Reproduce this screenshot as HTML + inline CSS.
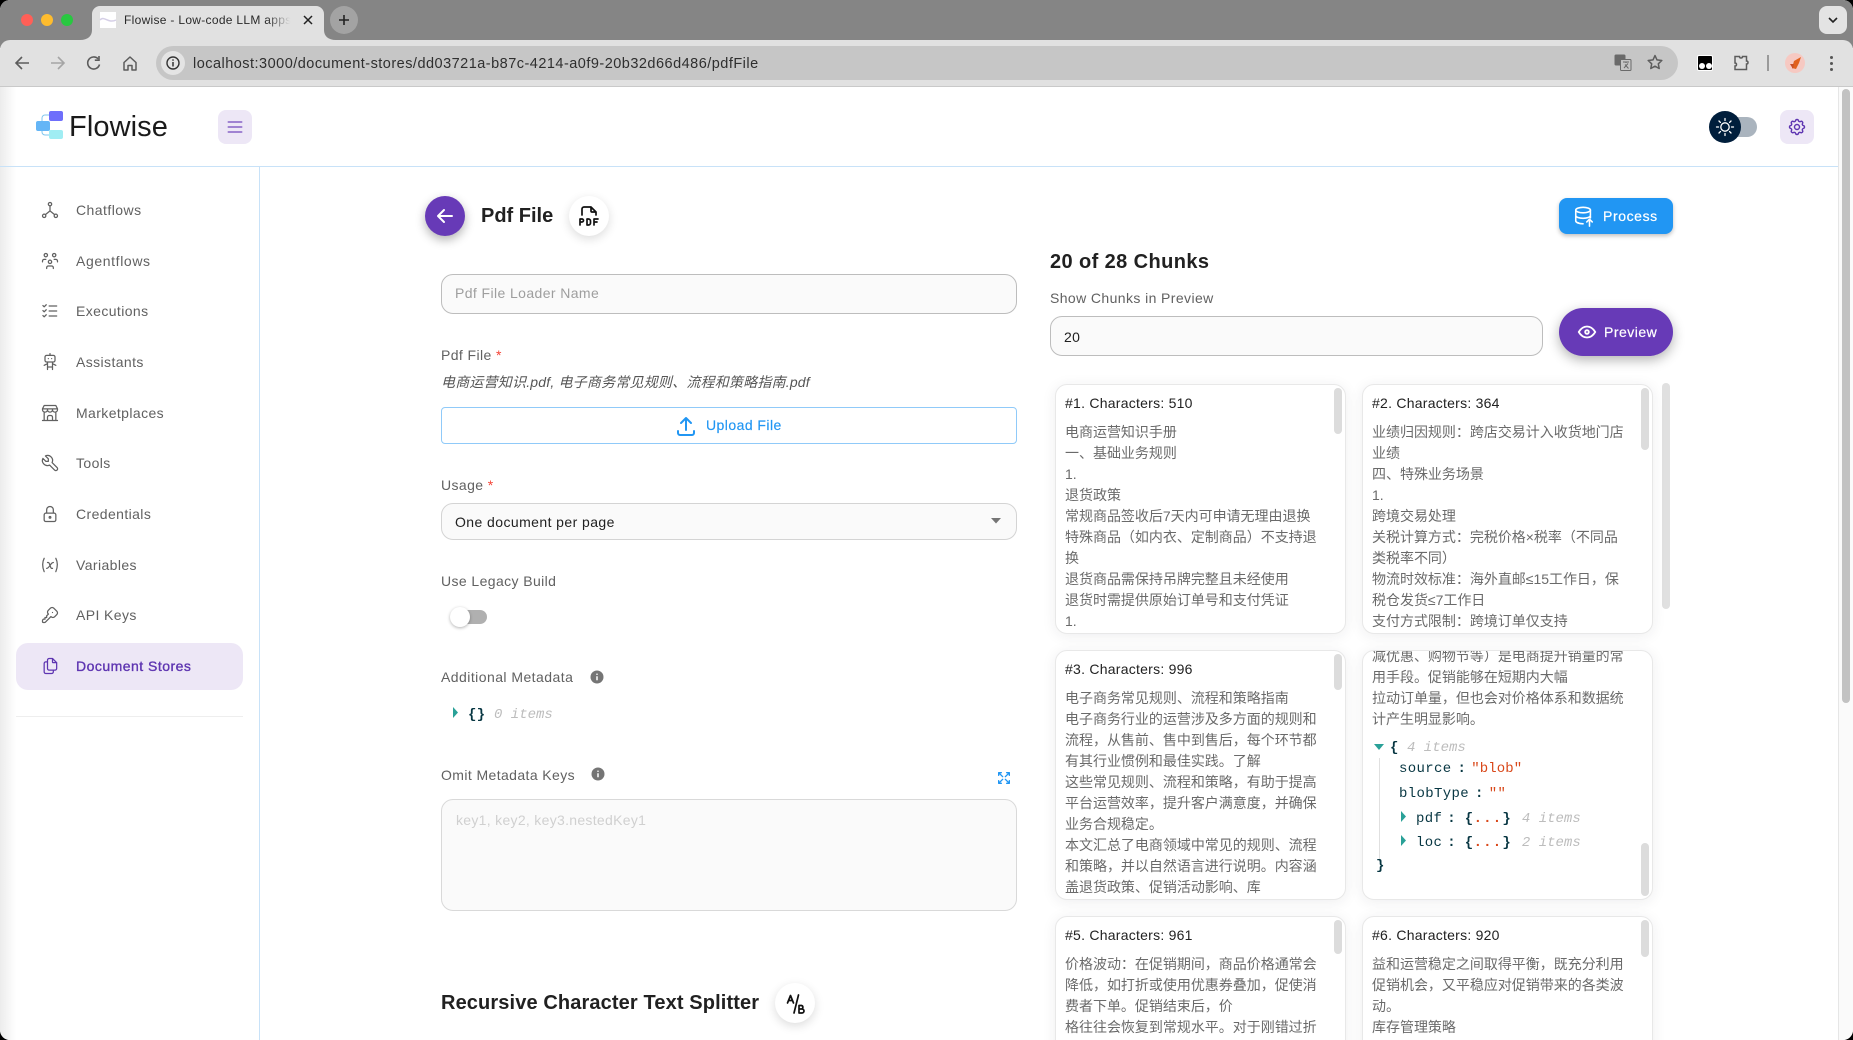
<!DOCTYPE html>
<html lang="zh-CN"><head><meta charset="utf-8"><title>Flowise - Low-code LLM apps</title>
<style>
*{box-sizing:border-box;margin:0;padding:0}
html,body{width:1853px;height:1040px;overflow:hidden;background:#000}
body{font-family:"Liberation Sans","Noto Sans CJK SC",sans-serif;font-size:14px;color:#616161}
#w{position:relative;width:1853px;height:1040px;overflow:hidden;background:#fff;border-radius:10px}
.a{position:absolute}
.t{position:absolute;white-space:nowrap;line-height:20px;height:20px;letter-spacing:.4px}
svg{position:absolute;overflow:visible}
.ic{fill:none;stroke:#616161;stroke-width:1.5;stroke-linecap:round;stroke-linejoin:round}
.card{position:absolute;width:291px;height:250px;background:#fff;border:1px solid #e8e8e8;border-radius:12px;box-shadow:0 2px 14px rgba(32,40,45,.08);overflow:hidden}
.card .ttl{position:absolute;left:9px;top:8px;line-height:20px;color:#212121;letter-spacing:.25px;white-space:nowrap}
.card .b{position:absolute;left:9px;top:37px;line-height:21px;color:#6a6a6a;white-space:nowrap;letter-spacing:-.02px}
.card .th{position:absolute;width:8px;background:#dcdcdc;border-radius:4px}
.field{position:absolute;background:#fafafa;border:1px solid #bdbdbd;border-radius:12px}
.circ{position:absolute;width:40px;height:40px;border-radius:50%;background:#fff;box-shadow:0 3px 10px rgba(0,0,0,.14)}
.m{font-family:"Liberation Mono",monospace;position:absolute;white-space:nowrap;line-height:20px;height:20px;font-size:14px;letter-spacing:.35px}
.it{font-style:italic;color:#bdbdbd;letter-spacing:0}
.r{color:#d9481a}
.k{color:#073642}
.bk{color:#073642;font-weight:bold}
.req{color:#f44336}
</style></head><body><div id="w">

<!-- browser chrome -->
<div class="a" style="left:0;top:0;width:1853px;height:48px;background:#858585"></div>
<div class="a" style="left:0;top:40px;width:1853px;height:47px;background:#e1e1e1;border-radius:10px 10px 0 0;border-bottom:1px solid #c9c9c9"></div>
<svg style="left:0;top:0" width="400" height="48"><path d="M80 40C88 40 92 36 92 30V14a8 8 0 0 1 8-8H316a8 8 0 0 1 8 8V30C324 36 328 40 336 40Z" fill="#e1e1e1"/></svg>
<div class="a" style="left:21px;top:14px;width:12px;height:12px;border-radius:50%;background:#ff5f57"></div>
<div class="a" style="left:41px;top:14px;width:12px;height:12px;border-radius:50%;background:#febc2e"></div>
<div class="a" style="left:61px;top:14px;width:12px;height:12px;border-radius:50%;background:#28c840"></div>
<div class="a" style="left:100px;top:12px;width:16px;height:16px;background:#fff"></div>
<svg style="left:100px;top:12px" width="16" height="16"><path d="M0 8C4 3 8 12 16 8" fill="none" stroke="#d5cfe6" stroke-width="1.5"/></svg>
<div class="t" style="left:124px;top:10px;width:168px;overflow:hidden;font-size:12px;color:#2a2a2a;letter-spacing:.3px;-webkit-mask-image:linear-gradient(90deg,#000 85%,transparent 99%)">Flowise - Low-code LLM apps</div>
<svg style="left:302px;top:14px" width="12" height="12"><path d="M2 2l8 8M10 2l-8 8" stroke="#222" stroke-width="1.5"/></svg>
<div class="a" style="left:330px;top:6px;width:28px;height:28px;border-radius:50%;background:#a3a3a3"></div>
<svg style="left:338px;top:14px" width="12" height="12"><path d="M6 1v10M1 6h10" stroke="#222" stroke-width="1.6"/></svg>
<div class="a" style="left:1819px;top:6px;width:28px;height:28px;border-radius:8px;background:#e3e3e3"></div>
<svg style="left:1827px;top:15px" width="12" height="10"><path d="M2 3l4 4 4-4" fill="none" stroke="#222" stroke-width="1.6"/></svg>

<svg style="left:14px;top:55px" width="16" height="16"><path d="M15 8H2M8 2L2 8l6 6" fill="none" stroke="#5c5c5c" stroke-width="1.6"/></svg>
<svg style="left:50px;top:55px" width="16" height="16"><path d="M1 8h13M8 2l6 6-6 6" fill="none" stroke="#a5a5a5" stroke-width="1.6"/></svg>
<svg style="left:86px;top:55px" width="16" height="16"><path d="M13.5 9.5A6 6 0 1 1 12 3.8M13 1v4.2H8.8" fill="none" stroke="#5c5c5c" stroke-width="1.6"/></svg>
<svg style="left:122px;top:55px" width="16" height="16"><path d="M2 7.5L8 2l6 5.5V15h-4v-4.5H6V15H2Z" fill="none" stroke="#5c5c5c" stroke-width="1.5" stroke-linejoin="round"/></svg>
<div class="a" style="left:156px;top:46px;width:1522px;height:34px;border-radius:17px;background:#c6c6c6"></div>
<div class="a" style="left:161px;top:51px;width:24px;height:24px;border-radius:50%;background:#e4e4e4"></div>
<svg style="left:166px;top:56px" width="14" height="14"><circle cx="7" cy="7" r="6" fill="none" stroke="#333" stroke-width="1.4"/><path d="M7 6v4.5M7 3.4v1.4" stroke="#333" stroke-width="1.5"/></svg>
<div class="t" style="left:193px;top:54px;font-size:14.5px;letter-spacing:.48px;color:#2f2f2f">localhost:3000/document-stores/dd03721a-b87c-4214-a0f9-20b32d66d486/pdfFile</div>
<svg style="left:1614px;top:54px" width="18" height="18"><rect x="0.5" y="0.5" width="11" height="11" rx="1.5" fill="#6a6a6a"/><rect x="6.5" y="5.5" width="10.5" height="11" rx="1" fill="#c6c6c6" stroke="#6a6a6a"/><path d="M9 8h6M12 8v1M10 14l4-4.5M11 10.5l3.5 4" stroke="#6a6a6a" fill="none"/></svg>
<svg style="left:1647px;top:54px" width="16" height="16"><path d="M8 1.5l2 4.4 4.8.6-3.5 3.3.9 4.7L8 12.2l-4.2 2.3.9-4.7L1.2 6.5 6 5.9Z" fill="none" stroke="#5c5c5c" stroke-width="1.5" stroke-linejoin="round"/></svg>
<div class="a" style="left:1697px;top:55px;width:16px;height:16px;border-radius:2px;background:#000;border:1px solid #fff"></div>
<div class="a" style="left:1699px;top:63px;width:6px;height:6px;border-radius:50%;background:#fff"></div>
<div class="a" style="left:1706px;top:63px;width:6px;height:6px;border-radius:50%;background:#fff"></div>
<svg style="left:1733px;top:55px" width="16" height="16"><path d="M2 1.5h4.5c0 2 3 2 3 0H13.5v4.500c2 0 2 3 0 3V14.500H2V11c2 0 2-3 0-3Z" fill="none" stroke="#5c5c5c" stroke-width="1.5"/></svg>
<div class="a" style="left:1767px;top:55px;width:1.5px;height:16px;background:#9a9a9a"></div>
<div class="a" style="left:1785px;top:53px;width:20px;height:20px;border-radius:50%;background:#f6c9c2"></div>
<svg style="left:1787px;top:55px" width="16" height="16"><path d="M5 13L7 6l7-4-2 6-3 6Z" fill="#e0601c"/><path d="M3 9l4 0-1 5Z" fill="#c94f27"/></svg>
<div class="a" style="left:1830px;top:56px;width:3px;height:3px;border-radius:50%;background:#555;box-shadow:0 6px 0 #555,0 12px 0 #555"></div>

<!-- window left shading -->
<div class="a" style="left:0;top:87px;width:16px;height:953px;background:linear-gradient(90deg,#ececec,#fff)"></div>

<!-- header -->
<svg style="left:36px;top:111px" width="28" height="28">
<path d="M14 4H9a3 3 0 0 0-3 3v5M6 19v2a3 3 0 0 0 3 3h4" fill="none" stroke="#7fc6ee" stroke-width="1"/>
<rect x="13" y="0" width="14" height="10" rx="2" fill="#6e6efb"/><rect x="0" y="10" width="14" height="10" rx="2" fill="#64b5f6"/><rect x="13" y="19" width="14" height="9" rx="2" fill="#a0edf3"/></svg>
<div class="t" style="left:69px;top:110px;height:34px;line-height:34px;font-size:29px;color:#1a1a1a;letter-spacing:.1px">Flowise</div>
<div class="a" style="left:218px;top:110px;width:34px;height:34px;border-radius:8px;background:#ede7f6"></div>
<svg style="left:225px;top:117px" width="20" height="20" viewBox="0 0 24 24"><path d="M4 6h16M4 12h16M4 18h16" fill="none" stroke="#9575cd" stroke-width="2" stroke-linecap="round"/></svg>
<div class="a" style="left:1713px;top:117px;width:44px;height:20px;border-radius:10px;background:#aab4be"></div>
<div class="a" style="left:1709px;top:111px;width:32px;height:32px;border-radius:50%;background:#001e3c"></div>
<svg style="left:1715px;top:117px" width="20" height="20" viewBox="0 0 20 20"><circle cx="10" cy="10" r="4.2" fill="none" stroke="#fff" stroke-width="1.3"/><path d="M10 1.5v2M10 16.5v2M1.5 10h2M16.5 10h2M4 4l1.4 1.4M14.6 14.6L16 16M4 16l1.4-1.4M14.6 5.4L16 4" stroke="#fff" stroke-width="1.3" stroke-linecap="round"/></svg>
<div class="a" style="left:1780px;top:110px;width:34px;height:34px;border-radius:8px;background:#ede7f6"></div>
<svg style="left:1787px;top:117px" width="20" height="20" viewBox="0 0 24 24"><g fill="none" stroke="#5e35b1" stroke-width="1.7" stroke-linecap="round" stroke-linejoin="round"><path d="M10.325 4.317c.426 -1.756 2.924 -1.756 3.35 0a1.724 1.724 0 0 0 2.573 1.066c1.543 -.94 3.31 .826 2.37 2.37a1.724 1.724 0 0 0 1.065 2.572c1.756 .426 1.756 2.924 0 3.35a1.724 1.724 0 0 0 -1.066 2.573c.94 1.543 -.826 3.31 -2.37 2.37a1.724 1.724 0 0 0 -2.572 1.065c-.426 1.756 -2.924 1.756 -3.35 0a1.724 1.724 0 0 0 -2.573 -1.066c-1.543 .94 -3.31 -.826 -2.37 -2.37a1.724 1.724 0 0 0 -1.065 -2.572c-1.756 -.426 -1.756 -2.924 0 -3.35a1.724 1.724 0 0 0 1.066 -2.573c-.94 -1.543 .826 -3.31 2.37 -2.37c1 .608 2.296 .07 2.572 -1.065z"/><circle cx="12" cy="12" r="3"/></g></svg>
<div class="a" style="left:0;top:166px;width:1838px;height:1px;background:#c8e2f8"></div>
<div class="a" style="left:259px;top:166px;width:1px;height:874px;background:#c8e2f8"></div>

<!-- page scrollbar -->
<div class="a" style="left:1838px;top:87px;width:15px;height:953px;background:#fafafa;border-left:1px solid #e6e6e6"></div>
<div class="a" style="left:1842px;top:89px;width:8px;height:614px;border-radius:4px;background:#c2c2c2"></div>

<!-- sidebar -->
<div class="a" style="left:16px;top:643px;width:227px;height:47px;border-radius:12px;background:#ede7f6"></div>
<div class="a" style="left:16px;top:716px;width:227px;height:1px;background:#eeeeee"></div>

<svg class="ic" style="left:40px;top:200px" width="20" height="20" viewBox="0 0 24 24"><circle cx="12" cy="5" r="2"/><circle cx="5" cy="19" r="2"/><circle cx="19" cy="19" r="2"/><path d="M6.5 17.5l5.5 -4.5l5.5 4.5M12 7v6"/></svg>
<div class="t" style="left:76px;top:200px;letter-spacing:.45px">Chatflows</div>
<svg class="ic" style="left:40px;top:251px" width="20" height="20" viewBox="0 0 24 24"><path d="M10 13a2 2 0 1 0 4 0a2 2 0 0 0 -4 0M8 21v-1a2 2 0 0 1 2 -2h4a2 2 0 0 1 2 2v1M15 5a2 2 0 1 0 4 0a2 2 0 0 0 -4 0M17 10h2a2 2 0 0 1 2 2v1M5 5a2 2 0 1 0 4 0a2 2 0 0 0 -4 0M3 13v-1a2 2 0 0 1 2 -2h2"/></svg>
<div class="t" style="left:76px;top:251px;letter-spacing:.62px">Agentflows</div>
<svg class="ic" style="left:40px;top:301px" width="20" height="20" viewBox="0 0 24 24"><path d="M3.5 5.5l1.5 1.5l2.5 -2.5M3.5 11.5l1.5 1.5l2.5 -2.5M3.5 17.5l1.5 1.5l2.5 -2.5M11 6h9M11 12h9M11 18h9"/></svg>
<div class="t" style="left:76px;top:301px">Executions</div>
<svg class="ic" style="left:40px;top:352px" width="20" height="20" viewBox="0 0 24 24"><path d="M6 6a2 2 0 0 1 2 -2h8a2 2 0 0 1 2 2v4a2 2 0 0 1 -2 2h-8a2 2 0 0 1 -2 -2zM12 2v2M9 12v9M15 12v9M5 16l4 -2M15 14l4 2M9 18h6M10 8v.01M14 8v.01"/></svg>
<div class="t" style="left:76px;top:352px">Assistants</div>
<svg class="ic" style="left:40px;top:403px" width="20" height="20" viewBox="0 0 24 24"><path d="M3 21h18M3 7v1a3 3 0 0 0 6 0v-1m0 1a3 3 0 0 0 6 0v-1m0 1a3 3 0 0 0 6 0v-1h-18l2 -4h14l2 4M5 21v-10.15M19 21v-10.15M9 21v-4a2 2 0 0 1 2 -2h2a2 2 0 0 1 2 2v4"/></svg>
<div class="t" style="left:76px;top:403px">Marketplaces</div>
<svg class="ic" style="left:40px;top:453px" width="20" height="20" viewBox="0 0 24 24"><path d="M7 10h3v-3l-3.5 -3.5a6 6 0 0 1 8 8l6 6a2 2 0 0 1 -3 3l-6 -6a6 6 0 0 1 -8 -8l3.5 3.5"/></svg>
<div class="t" style="left:76px;top:453px">Tools</div>
<svg class="ic" style="left:40px;top:504px" width="20" height="20" viewBox="0 0 24 24"><path d="M5 13a2 2 0 0 1 2 -2h10a2 2 0 0 1 2 2v6a2 2 0 0 1 -2 2h-10a2 2 0 0 1 -2 -2v-6zM11 16a1 1 0 1 0 2 0a1 1 0 0 0 -2 0M8 11v-4a4 4 0 1 1 8 0v4"/></svg>
<div class="t" style="left:76px;top:504px">Credentials</div>
<svg class="ic" style="left:40px;top:555px" width="20" height="20" viewBox="0 0 24 24"><path d="M5 4c-2.5 5 -2.5 10 0 16m14 -16c2.5 5 2.5 10 0 16m-10 -11h1c1 0 1 1 2.016 3.527c.984 2.473 .984 3.473 1.984 3.473h1M8 16c1.5 0 3 -2 4 -3.5s2.5 -3.5 4 -3.5"/></svg>
<div class="t" style="left:76px;top:555px">Variables</div>
<svg class="ic" style="left:40px;top:605px" width="20" height="20" viewBox="0 0 24 24"><path d="M16.555 3.843l3.602 3.602a2.877 2.877 0 0 1 0 4.069l-2.643 2.643a2.877 2.877 0 0 1 -4.069 0l-.301 -.301l-6.558 6.558a2 2 0 0 1 -1.239 .578l-.175 .008h-1.172a1 1 0 0 1 -.993 -.883l-.007 -.117v-1.172a2 2 0 0 1 .467 -1.284l.119 -.13l.414 -.414h2v-2h2v-2l2.144 -2.144l-.301 -.301a2.877 2.877 0 0 1 0 -4.069l2.643 -2.643a2.877 2.877 0 0 1 4.069 0zM15 9h.01"/></svg>
<div class="t" style="left:76px;top:605px">API Keys</div>
<svg class="ic" style="left:40px;top:656px;stroke:#5e35b1" width="20" height="20" viewBox="0 0 24 24"><path d="M15 3v4a1 1 0 0 0 1 1h4M18 17h-7a2 2 0 0 1 -2 -2v-10a2 2 0 0 1 2 -2h4l5 5v7a2 2 0 0 1 -2 2zM16 17v2a2 2 0 0 1 -2 2h-7a2 2 0 0 1 -2 -2v-10a2 2 0 0 1 2 -2h2"/></svg>
<div class="t" style="left:76px;top:656px;color:#5e35b1;letter-spacing:.48px;-webkit-text-stroke:.35px #5e35b1">Document Stores</div>

<!-- title row -->
<div class="a" style="left:425px;top:196px;width:40px;height:40px;border-radius:50%;background:#673ab7;box-shadow:0 4px 10px rgba(0,0,0,.3)"></div>
<svg style="left:433px;top:204px" width="24" height="24" viewBox="0 0 24 24"><path d="M5 12h14M5 12l6 6M5 12l6 -6" fill="none" stroke="#fff" stroke-width="2" stroke-linecap="round" stroke-linejoin="round"/></svg>
<div class="t" style="left:481px;top:206px;font-size:20px;font-weight:bold;color:#212121;letter-spacing:0">Pdf File</div>
<div class="circ" style="left:569px;top:196px"></div>
<svg style="left:577px;top:204px" width="24" height="24" viewBox="0 0 24 24"><g fill="none" stroke="#111" stroke-width="1.7" stroke-linecap="round" stroke-linejoin="round"><path d="M14 3v4a1 1 0 0 0 1 1h4M5 11v-6a2 2 0 0 1 2 -2h7l5 5v3"/><path d="M3 18h2a1.5 1.5 0 0 0 0 -3h-2v6M10 15v6h1.5a2 2 0 0 0 2 -2v-2a2 2 0 0 0 -2 -2h-1.5zM17 18h3M21 15h-4v6"/></g></svg>

<div class="a" style="left:1559px;top:198px;width:114px;height:36px;border-radius:8px;background:#2196f3;box-shadow:0 2px 4px rgba(0,0,0,.25)"></div>
<svg style="left:1573px;top:205px" width="22" height="22" viewBox="0 0 24 24"><g fill="none" stroke="#fff" stroke-width="1.7" stroke-linecap="round" stroke-linejoin="round"><ellipse cx="11" cy="5.5" rx="8" ry="3"/><path d="M3 5.5v12c0 1.7 3.6 3 8 3M3 11.5c0 1.7 3.6 3 8 3s8-1.3 8-3V5.5M3 17c0 1 1 2 3 2.5M19 14v-2"/><path d="M18 23v-7M15 18.5l3-3 3 3"/></g></svg>
<div class="t" style="left:1603px;top:206px;color:#fff;letter-spacing:.6px;-webkit-text-stroke:.2px #fff">Process</div>

<!-- left form -->
<div class="field" style="left:441px;top:274px;width:576px;height:40px"></div>
<div class="t" style="left:455px;top:283px;color:#9e9e9e">Pdf File Loader Name</div>
<div class="t" style="left:441px;top:345px">Pdf File <span class="req">*</span></div>
<div class="t" style="left:441px;top:372px;font-style:italic;color:#555;letter-spacing:.2px">电商运营知识.pdf, 电子商务常见规则、流程和策略指南.pdf</div>
<div class="a" style="left:441px;top:407px;width:576px;height:37px;border:1px solid #90caf9;border-radius:4px"></div>
<svg style="left:674px;top:414px" width="24" height="24" viewBox="0 0 24 24"><path d="M4 17v2a2 2 0 0 0 2 2h12a2 2 0 0 0 2 -2v-2M7 9l5 -5l5 5M12 4v12" fill="none" stroke="#2196f3" stroke-width="2" stroke-linecap="round" stroke-linejoin="round"/></svg>
<div class="t" style="left:706px;top:415px;color:#2196f3;letter-spacing:.45px;-webkit-text-stroke:.15px #2196f3">Upload File</div>
<div class="t" style="left:441px;top:475px">Usage <span class="req">*</span></div>
<div class="field" style="left:441px;top:503px;width:576px;height:37px;border-color:#d4d4d4"></div>
<div class="t" style="left:455px;top:512px;color:#212121;letter-spacing:.42px">One document per page</div>
<svg style="left:991px;top:518px" width="10" height="6"><path d="M0 0h10L5 5.5Z" fill="#757575"/></svg>
<div class="t" style="left:441px;top:571px">Use Legacy Build</div>
<div class="a" style="left:452px;top:610px;width:35px;height:14px;border-radius:7px;background:#b0b0b0"></div>
<div class="a" style="left:450px;top:607px;width:20px;height:20px;border-radius:50%;background:#fff;box-shadow:0 1px 3px rgba(0,0,0,.3)"></div>
<div class="t" style="left:441px;top:667px;letter-spacing:.45px">Additional Metadata</div>
<svg style="left:590px;top:670px" width="14" height="14"><circle cx="7" cy="7" r="6.5" fill="#757575"/><path d="M7 6.2v4M7 3.6v1.3" stroke="#fff" stroke-width="1.5"/></svg>
<svg style="left:452px;top:707px" width="8" height="11"><path d="M1 0l5 5.5L1 11Z" fill="#2aa198"/></svg>
<div class="m bk" style="left:468px;top:705px;letter-spacing:.4px">{}</div>
<div class="m it" style="left:494px;top:705px">0 items</div>
<div class="t" style="left:441px;top:765px">Omit Metadata Keys</div>
<svg style="left:591px;top:767px" width="14" height="14"><circle cx="7" cy="7" r="6.5" fill="#757575"/><path d="M7 6.2v4M7 3.6v1.3" stroke="#fff" stroke-width="1.5"/></svg>
<svg style="left:996px;top:770px" width="16" height="16" viewBox="0 0 24 24"><path d="M16 4h4v4M14 10l6 -6M8 20h-4v-4M4 20l6 -6M16 20h4v-4M14 14l6 6M8 4h-4v4M4 4l6 6" fill="none" stroke="#2196f3" stroke-width="2" stroke-linecap="round" stroke-linejoin="round"/></svg>
<div class="field" style="left:441px;top:799px;width:576px;height:112px;border-color:#d9d9d9"></div>
<div class="t" style="left:456px;top:810px;color:#d0d0d0;letter-spacing:.3px">key1, key2, key3.nestedKey1</div>
<div class="t" style="left:441px;top:993px;font-size:20px;font-weight:bold;color:#212121;letter-spacing:.12px">Recursive Character Text Splitter</div>
<div class="circ" style="left:775px;top:983px"></div>
<svg style="left:783px;top:991px" width="24" height="24" viewBox="0 0 24 24"><g fill="none" stroke="#111" stroke-width="1.7" stroke-linecap="round" stroke-linejoin="round"><path d="M4.5 12L7.5 4.5L10.5 12M5.5 9.5h4"/><path d="M15.5 4L11 22"/><path d="M16 14.5v7.5h3a2 2 0 0 0 0-4h-3m0 0h2.5a1.8 1.8 0 0 0 0-3.5h-2.5"/></g></svg>

<!-- right column -->
<div class="t" style="left:1050px;top:252px;font-size:20px;font-weight:bold;color:#212121">20 of 28 Chunks</div>
<div class="t" style="left:1050px;top:288px">Show Chunks in Preview</div>
<div class="field" style="left:1050px;top:316px;width:493px;height:40px"></div>
<div class="t" style="left:1064px;top:327px;color:#212121">20</div>
<div class="a" style="left:1559px;top:308px;width:114px;height:48px;border-radius:24px;background:#673ab7;box-shadow:0 4px 12px rgba(0,0,0,.3)"></div>
<svg style="left:1576px;top:321px" width="22" height="22" viewBox="0 0 24 24"><path d="M10 12a2 2 0 1 0 4 0a2 2 0 0 0 -4 0M21 12c-2.4 4 -5.4 6 -9 6c-3.6 0 -6.6 -2 -9 -6c2.4 -4 5.4 -6 9 -6c3.6 0 6.6 2 9 6" fill="none" stroke="#fff" stroke-width="2" stroke-linecap="round" stroke-linejoin="round"/></svg>
<div class="t" style="left:1604px;top:322px;color:#fff;letter-spacing:.5px;-webkit-text-stroke:.2px #fff">Preview</div>
<div class="a" style="left:1662px;top:383px;width:8px;height:226px;border-radius:4px;background:#e0e0e0"></div>

<!-- cards -->
<div class="card" style="left:1055px;top:384px">
<div class="ttl">#1. Characters: 510</div>
<div class="b">电商运营知识手册<br>一、基础业务规则<br>1.<br>退货政策<br>常规商品签收后7天内可申请无理由退换<br>特殊商品（如内衣、定制商品）不支持退<br>换<br>退货商品需保持吊牌完整且未经使用<br>退货时需提供原始订单号和支付凭证<br>1.</div>
<div class="th" style="left:278px;top:3px;height:46px"></div>
</div>
<div class="card" style="left:1362px;top:384px">
<div class="ttl">#2. Characters: 364</div>
<div class="b">业绩归因规则：跨店交易计入收货地门店<br>业绩<br>四、特殊业务场景<br>1.<br>跨境交易处理<br>关税计算方式：完税价格×税率（不同品<br>类税率不同）<br>物流时效标准：海外直邮≤15工作日，保<br>税仓发货≤7工作日<br>支付方式限制：跨境订单仅支持</div>
<div class="th" style="left:278px;top:3px;height:62px"></div>
</div>
<div class="card" style="left:1055px;top:650px">
<div class="ttl">#3. Characters: 996</div>
<div class="b">电子商务常见规则、流程和策略指南<br>电子商务行业的运营涉及多方面的规则和<br>流程，从售前、售中到售后，每个环节都<br>有其行业惯例和最佳实践。了解<br>这些常见规则、流程和策略，有助于提高<br>平台运营效率，提升客户满意度，并确保<br>业务合规稳定。<br>本文汇总了电商领域中常见的规则、流程<br>和策略，并以自然语言进行说明。内容涵<br>盖退货政策、促销活动影响、库</div>
<div class="th" style="left:278px;top:3px;height:36px"></div>
</div>
<div class="card" style="left:1362px;top:650px">
<div class="b" style="top:-5px">减优惠、购物节等）是电商提升销量的常<br>用手段。促销能够在短期内大幅<br>拉动订单量，但也会对价格体系和数据统<br>计产生明显影响。</div>
<div class="a" style="left:16px;top:107px;width:1px;height:104px;background:#e0e0e0"></div>
<svg style="left:11px;top:93px" width="10" height="7"><path d="M0 0h10L5 6Z" fill="#2aa198"/></svg>
<div class="m bk" style="left:27px;top:87px">{</div><div class="m it" style="left:44px;top:87px">4 items</div>
<div class="m k" style="left:36px;top:108px">source<span style="margin-left:6px;font-weight:bold">:</span><span class="r" style="margin-left:5px;letter-spacing:.1px">"blob"</span></div>
<div class="m k" style="left:36px;top:133px">blobType<span style="margin-left:6px;font-weight:bold">:</span><span class="r" style="margin-left:5px">""</span></div>
<svg style="left:37px;top:160px" width="8" height="11"><path d="M1 0l5 5.5L1 11Z" fill="#2aa198"/></svg>
<div class="m k" style="left:53px;top:158px">pdf<b style="margin-left:5px">:</b> <span class="bk">{</span><b class="r" style="letter-spacing:1.2px">...</b><span class="bk">}</span> <span class="it" style="margin-left:2px">4 items</span></div>
<svg style="left:37px;top:184px" width="8" height="11"><path d="M1 0l5 5.5L1 11Z" fill="#2aa198"/></svg>
<div class="m k" style="left:53px;top:182px">loc<b style="margin-left:5px">:</b> <span class="bk">{</span><b class="r" style="letter-spacing:1.2px">...</b><span class="bk">}</span> <span class="it" style="margin-left:2px">2 items</span></div>
<div class="m bk" style="left:13px;top:205px">}</div>
<div class="th" style="left:278px;top:192px;height:53px"></div>
</div>
<div class="card" style="left:1055px;top:916px">
<div class="ttl">#5. Characters: 961</div>
<div class="b">价格波动：在促销期间，商品价格通常会<br>降低，如打折或使用优惠券叠加，促使消<br>费者下单。促销结束后，价<br>格往往会恢复到常规水平。对于刚错过折</div>
<div class="th" style="left:278px;top:3px;height:34px"></div>
</div>
<div class="card" style="left:1362px;top:916px">
<div class="ttl">#6. Characters: 920</div>
<div class="b">益和运营稳定之间取得平衡，既充分利用<br>促销机会，又平稳应对促销带来的各类波<br>动。<br>库存管理策略</div>
<div class="th" style="left:278px;top:3px;height:37px"></div>
</div>

</div></body></html>
